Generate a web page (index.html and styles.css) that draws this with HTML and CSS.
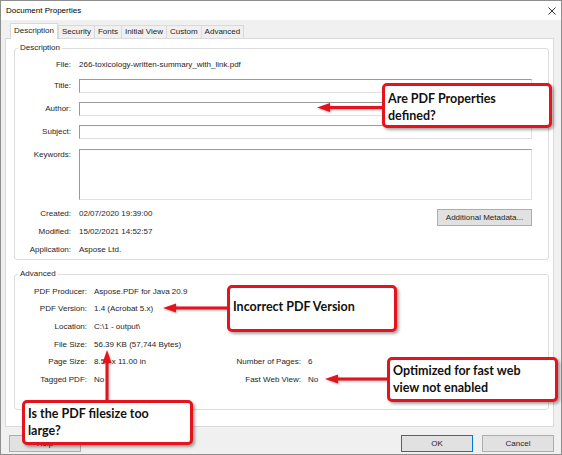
FILE: index.html
```html
<!DOCTYPE html>
<html lang="en">
  <head>
    <meta charset="UTF-8" />
    <meta name="viewport" content="width=device-width, initial-scale=1.0" />
    <title>Document Properties</title>
    <link rel="stylesheet" href="styles.css">
  </head>
  <body>
    <div class="screen">
      <div class="window">
        <div class="titlebar">
          <span>Document Properties</span>
          <svg class="close" width="8" height="8" viewBox="0 0 8 8">
            <path d="M0.5 0.5 L7.5 7.5 M7.5 0.5 L0.5 7.5" stroke="#333" stroke-width="1" fill="none" />
          </svg>
        </div>
        <div class="dialog">
          <div class="tabs">
            <div class="tab active">Description</div>
            <div class="tab">Security</div>
            <div class="tab">Fonts</div>
            <div class="tab">Initial View</div>
            <div class="tab">Custom</div>
            <div class="tab">Advanced</div>
          </div>
          <div class="panel">
            <fieldset class="group desc">
              <legend>Description</legend>
              <div class="form">
                <label>File:</label>
                <span>266-toxicology-written-summary_with_link.pdf</span>
                <label>Title:</label>
                <input type="text" />
                <label>Author:</label>
                <input type="text" />
                <label>Subject:</label>
                <input type="text" />
                <label class="top">Keywords:</label>
                <textarea></textarea>
                <label>Created:</label>
                <div class="with-btn">
                  <span>02/07/2020 19:39:00</span>
                  <button class="btn meta">Additional Metadata...</button>
                </div>
                <label>Modified:</label>
                <span>15/02/2021 14:52:57</span>
                <label>Application:</label>
                <span>Aspose Ltd.</span>
              </div>
            </fieldset>
            <fieldset class="group adv">
              <legend>Advanced</legend>
              <div class="adv-grid">
                <label>PDF Producer:</label>
                <span class="wide">Aspose.PDF for Java 20.9</span>
                <label>PDF Version:</label>
                <span class="wide">1.4 (Acrobat 5.x)</span>
                <label>Location:</label>
                <span class="wide">C:\1 - output\</span>
                <label>File Size:</label>
                <span class="wide">56.39 KB (57,744 Bytes)</span>
                <label>Page Size:</label>
                <span>8.50 x 11.00 in</span>
                <label>Number of Pages:</label>
                <span>6</span>
                <label>Tagged PDF:</label>
                <span>No</span>
                <label>Fast Web View:</label>
                <span>No</span>
              </div>
            </fieldset>
          </div>
          <div class="buttons">
            <button class="btn">Help</button>
            <div class="spacer"></div>
            <button class="btn ok">OK</button>
            <button class="btn">Cancel</button>
          </div>
        </div>
      </div>

      <svg class="arrows" width="562" height="455" viewBox="0 0 562 455">
        <g fill="#e5131b" stroke="#e5131b">
          <line x1="384" y1="107.5" x2="328" y2="107.5" stroke-width="3" />
          <polygon points="317,107.5 330,103 330,112" stroke="none" />
          <line x1="229" y1="308" x2="174" y2="308" stroke-width="3" />
          <polygon points="163,308 176,303.5 176,312.5" stroke="none" />
          <line x1="389" y1="379" x2="336" y2="379" stroke-width="3" />
          <polygon points="325,379 338,374.5 338,383.5" stroke="none" />
          <line x1="107" y1="402" x2="107" y2="361" stroke-width="3" />
          <polygon points="107,350 102.5,363 111.5,363" stroke="none" />
        </g>
      </svg>

      <div class="callout c-props">Are PDF Properties<br />defined?</div>
      <div class="callout c-version">Incorrect PDF Version</div>
      <div class="callout c-web">Optimized for fast web<br />view not enabled</div>
      <div class="callout c-size">Is the PDF filesize too<br />large?</div>
    </div>
  </body>
</html>
```

FILE: styles.css
```css
body {
  margin: 0;
}
.screen {
  position: relative;
  width: 562px;
  height: 455px;
  overflow: hidden;
  font-family: "Liberation Sans", Arial, sans-serif;
  font-size: 8px;
  color: #1e1e1e;
}
.window {
  height: 100%;
  box-sizing: border-box;
  border: 1px solid #8e8e8e;
  background: #f0f0f0;
  display: flex;
  flex-direction: column;
}
.titlebar {
  height: 19px;
  background: #fff;
  color: #000;
  display: flex;
  align-items: center;
  justify-content: space-between;
  padding: 0 5px;
}
.dialog {
  flex: 1;
  padding: 3px 7px 0 4px;
  display: flex;
  flex-direction: column;
}

/* tabs */
.tabs {
  display: flex;
  align-items: flex-end;
  height: 16px;
  padding-left: 5px;
  margin-bottom: -1px;
  position: relative;
  z-index: 1;
}
.tab {
  height: 13px;
  box-sizing: border-box;
  margin-bottom: 1px;
  padding: 0 3px;
  line-height: 12px;
  border: 1px solid #d9d9d9;
  border-bottom: none;
  background: #f0f0f0;
}
.tab + .tab {
  margin-left: -1px;
}
.tab.active {
  height: 16px;
  margin-bottom: 0;
  line-height: 14px;
  background: #fff;
  padding: 0 3px;
}
.tab.active + .tab {
  margin-left: 0;
}

/* panel */
.panel {
  height: 389px;
  box-sizing: border-box;
  background: #fff;
  border: 1px solid #d9d9d9;
  padding-top: 4px;
}
.group {
  margin: 0 4px 0 8px;
  border: 1px solid #dcdcdc;
  border-radius: 3px;
  min-width: 0;
}
.group legend {
  margin-left: 3px;
  padding: 0 2px;
  line-height: 10px;
}
.desc {
  padding: 5px 15px 2px 0;
}
.adv {
  margin-top: 9px;
  padding: 4px 0 0 0;
  height: 141px;
  box-sizing: border-box;
}
label {
  text-align: right;
}
.form {
  display: grid;
  grid-template-columns: 56px 453px;
  grid-template-rows: 21px 23px 23px 24px 58px 18px 18px 14px;
  column-gap: 8px;
  line-height: 14px;
}
.form input,
.form textarea {
  margin: 0;
  padding: 0 2px;
  width: 100%;
  height: 14px;
  box-sizing: border-box;
  border: 1px solid;
  border-color: #9a9a9a #e0e0e0 #e0e0e0 #9a9a9a;
  font: inherit;
  resize: none;
}
.form textarea {
  height: 51px;
}
.form .top {
  line-height: 12px;
}
.with-btn {
  display: flex;
  justify-content: space-between;
  align-items: flex-start;
}
.btn {
  margin: 0;
  padding: 0;
  width: 72px;
  height: 17px;
  box-sizing: border-box;
  border: 1px solid #adadad;
  background: #e1e1e1;
  font: inherit;
  color: #1e1e1e;
}
.btn.meta {
  width: 95px;
  margin-top: 2px;
}
.btn.ok {
  border-color: #0078d7;
  margin-right: 9px;
}
.adv-grid {
  display: grid;
  grid-template-columns: 72px 119px 81px auto;
  grid-auto-rows: 17.6px;
  column-gap: 7px;
  align-items: center;
  line-height: 12px;
}
.adv-grid .wide {
  grid-column: 2 / 5;
}

/* bottom buttons */
.buttons {
  display: flex;
  padding-top: 8px;
}
.buttons .btn:first-child {
  margin-left: 4px;
}
.spacer {
  flex: 1;
}

/* annotations */
.arrows {
  position: absolute;
  left: 0;
  top: 0;
  filter: drop-shadow(1px 1px 1px rgba(0, 0, 0, 0.3));
}
.callout {
  position: absolute;
  box-sizing: border-box;
  border: 3px solid #e5131b;
  border-radius: 5px;
  background: #fff;
  padding-left: 3px;
  font-family: Lato, "Liberation Sans", sans-serif;
  font-weight: 700;
  font-size: 12.5px;
  line-height: 17px;
  color: #111;
  white-space: nowrap;
  box-shadow: 2px 2px 3px rgba(0, 0, 0, 0.35);
}
.c-props {
  left: 382px;
  top: 83px;
  width: 170px;
  height: 45px;
  padding-top: 4px;
}
.c-version {
  left: 227px;
  top: 285px;
  width: 170px;
  height: 47px;
  padding-top: 10px;
}
.c-web {
  left: 387px;
  top: 357px;
  width: 171px;
  height: 45px;
  padding-top: 2px;
}
.c-size {
  left: 22px;
  top: 400px;
  width: 171px;
  height: 45px;
  padding-top: 2px;
}
```
